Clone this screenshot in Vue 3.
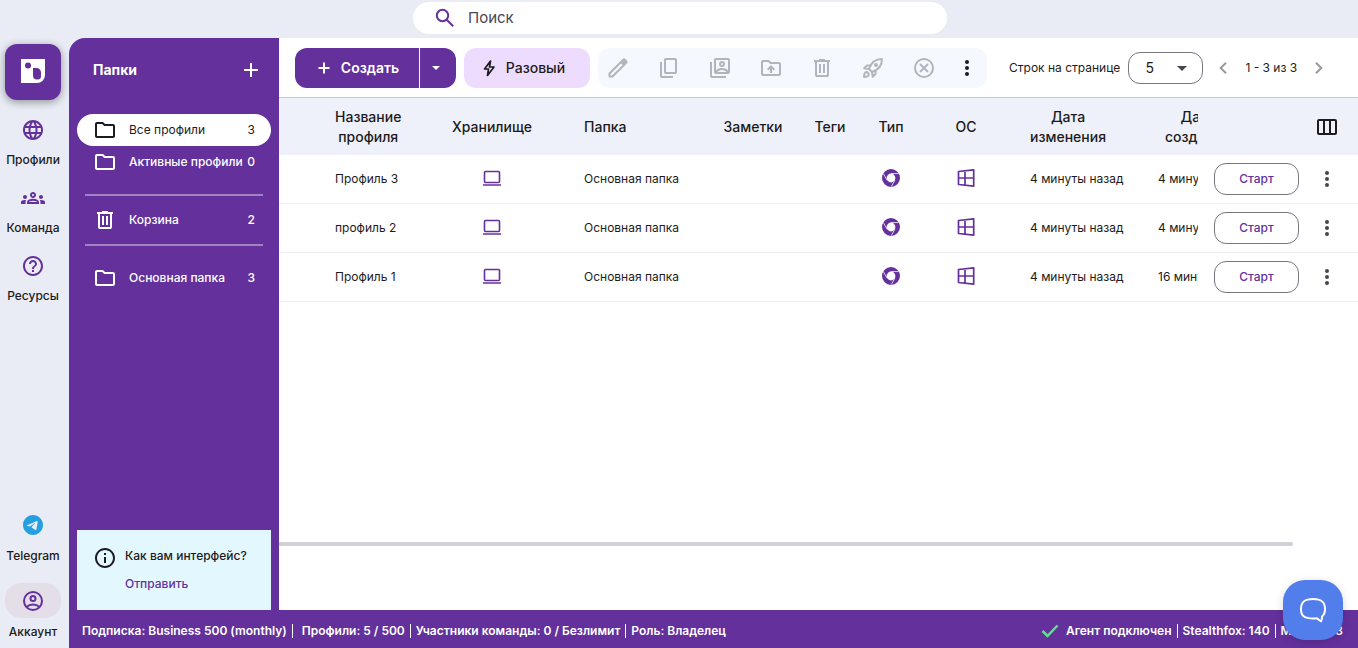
<script setup>
import { ref } from 'vue'

const perPage = ref('5')
const search = ref('')

const icons = {
  add: 'M19 13h-6v6h-2v-6H5v-2h6V5h2v6h6v2z',
  folder: 'M20 6h-8l-2-2H4c-1.1 0-2 .9-2 2v12c0 1.1.9 2 2 2h16c1.1 0 2-.9 2-2V8c0-1.1-.9-2-2-2zm0 12H4V6h5.17l2 2H20v10z',
  globe: 'M11.99 2C6.47 2 2 6.48 2 12s4.47 10 9.99 10C17.52 22 22 17.52 22 12S17.52 2 11.99 2zm6.93 6h-2.95a15.65 15.65 0 0 0-1.38-3.56A8.03 8.03 0 0 1 18.92 8zM12 4.04c.83 1.2 1.48 2.53 1.91 3.96h-3.82c.43-1.43 1.08-2.76 1.91-3.96zM4.26 14C4.1 13.36 4 12.69 4 12s.1-1.36.26-2h3.38c-.08.66-.14 1.32-.14 2s.06 1.34.14 2H4.26zm.82 2h2.95c.32 1.25.78 2.45 1.38 3.56A7.987 7.987 0 0 1 5.08 16zm2.95-8H5.08a7.987 7.987 0 0 1 4.33-3.56A15.65 15.65 0 0 0 8.03 8zM12 19.96c-.83-1.2-1.48-2.53-1.91-3.96h3.82c-.43 1.43-1.08 2.76-1.91 3.96zM14.34 14H9.66c-.09-.66-.16-1.32-.16-2s.07-1.35.16-2h4.68c.09.65.16 1.32.16 2s-.07 1.34-.16 2zm.25 5.56c.6-1.11 1.06-2.31 1.38-3.56h2.95a8.03 8.03 0 0 1-4.33 3.56zM16.36 14c.08-.66.14-1.32.14-2s-.06-1.34-.14-2h3.38c.16.64.26 1.31.26 2s-.1 1.36-.26 2h-3.38z',
  team: 'M4 13c1.1 0 2-.9 2-2s-.9-2-2-2-2 .9-2 2 .9 2 2 2zm1.13 1.1c-.37-.06-.74-.1-1.13-.1-.99 0-1.93.21-2.78.58C.48 14.9 0 15.62 0 16.43V18h4.5v-1.61c0-.83.23-1.61.63-2.29zM20 13c1.1 0 2-.9 2-2s-.9-2-2-2-2 .9-2 2 .9 2 2 2zm4 3.43c0-.81-.48-1.53-1.22-1.85-.85-.37-1.79-.58-2.78-.58-.39 0-.76.04-1.13.1.4.68.63 1.46.63 2.29V18H24v-1.57zm-7.76-2.78c-1.17-.52-2.61-.9-4.24-.9s-3.07.39-4.24.9C6.68 14.13 6 15.21 6 16.39V18h12v-1.61c0-1.18-.68-2.26-1.76-2.74zM8.07 16c.09-.23.13-.39.91-.69.97-.38 1.99-.56 3.02-.56s2.05.18 3.02.56c.77.3.81.46.91.69H8.07zM12 8c.55 0 1 .45 1 1s-.45 1-1 1-1-.45-1-1 .45-1 1-1m0-2c-1.66 0-3 1.34-3 3s1.34 3 3 3 3-1.34 3-3-1.34-3-3-3z',
  help: 'M11 18h2v-2h-2v2zm1-16C6.48 2 2 6.48 2 12s4.48 10 10 10 10-4.48 10-10S17.52 2 12 2zm0 18c-4.41 0-8-3.59-8-8s3.59-8 8-8 8 3.59 8 8-3.59 8-8 8zm0-14c-2.21 0-4 1.79-4 4h2c0-1.1.9-2 2-2s2 .9 2 2c0 2-3 1.75-3 5h2c0-2.25 3-2.5 3-5 0-2.21-1.79-4-4-4z',
  info: 'M11 7h2v2h-2zm0 4h2v6h-2zm1-9C6.48 2 2 6.48 2 12s4.48 10 10 10 10-4.48 10-10S17.52 2 12 2zm0 18c-4.41 0-8-3.59-8-8s3.59-8 8-8 8 3.59 8 8-3.59 8-8 8z',
  telegram: 'M12 2C6.48 2 2 6.48 2 12s4.48 10 10 10 10-4.48 10-10S17.52 2 12 2zm4.64 6.8c-.15 1.58-.8 5.42-1.13 7.19-.14.75-.42 1-.68 1.03-.58.05-1.02-.38-1.58-.75-.88-.58-1.38-.94-2.23-1.5-.99-.65-.35-1.01.22-1.59.15-.15 2.71-2.48 2.76-2.69.01-.03.01-.12-.05-.18s-.14-.04-.21-.02c-.09.02-1.49.95-4.22 2.79-.4.27-.76.41-1.08.4-.36-.01-1.04-.2-1.55-.37-.63-.2-1.12-.31-1.08-.66.02-.18.27-.36.74-.55 2.92-1.27 4.86-2.11 5.83-2.51 2.78-1.16 3.35-1.36 3.73-1.36.08 0 .27.02.39.12.1.08.13.19.14.27-.01.06.01.24 0 .38z',
  trash: 'M7 21q-.825 0-1.413-.587Q5 19.825 5 19V6H4V4h5V3h6v1h5v2h-1v13q0 .825-.587 1.413Q17.825 21 17 21ZM17 6H7v13h10ZM9 17h2V8H9Zm4 0h2V8h-2Z',
  copy: 'M9 18q-.825 0-1.412-.587Q7 16.825 7 16V4q0-.825.588-1.413Q8.175 2 9 2h9q.825 0 1.413.587Q20 3.175 20 4v12q0 .825-.587 1.413Q18.825 18 18 18Zm0-2h9V4H9v12Zm-4 6q-.825 0-1.413-.587Q3 20.825 3 20V6h2v14h11v2Z',
}

const navItems = [
  { icon: 'globe', label: 'Профили' },
  { icon: 'team', label: 'Команда' },
  { icon: 'help', label: 'Ресурсы' },
]

const folders = [
  { icon: 'folder', label: 'Все профили', count: 3, active: true },
  { icon: 'folder', label: 'Активные профили', count: 0, dividerAfter: true },
  { icon: 'trash', label: 'Корзина', count: 2, dividerAfter: true },
  { icon: 'folder', label: 'Основная папка', count: 3 },
]

const rows = [
  { name: 'Профиль 3', folder: 'Основная папка', changed: '4 минуты назад', created: '4 минуты назад' },
  { name: 'профиль 2', folder: 'Основная папка', changed: '4 минуты назад', created: '4 минуты назад' },
  { name: 'Профиль 1', folder: 'Основная папка', changed: '4 минуты назад', created: '16 минут назад' },
]
</script>

<template>
  <div class="app">
    <header class="topbar">
      <label class="search">
        <svg class="icon" viewBox="0 0 24 24" fill="none" stroke="currentColor" stroke-width="2" aria-hidden="true">
          <circle cx="9.500" cy="9.500" r="5.700" /><path d="M13.700 13.700l6.500 6.500" />
        </svg>
        <input v-model="search" type="search" placeholder="Поиск" aria-label="Поиск" />
      </label>
    </header>

    <div class="shell">
      <nav class="rail">
        <a class="logo" href="#" aria-label="Главная">
          <svg width="24" height="24" viewBox="0 0 24 24" aria-hidden="true">
            <path fill="#fff" d="M0 0h24v16a8 8 0 0 1-8 8H0z" />
            <circle cx="7" cy="6.500" r="3" fill="#63309c" />
            <path fill="#63309c" d="M12 9h3.500a4.500 4.500 0 0 1 4.500 4.500v3.500a3.500 3.500 0 0 1-3.500 3.500h-.5a4 4 0 0 1-4-4z" />
          </svg>
        </a>
        <a v-for="item in navItems" :key="item.label" class="nav" href="#">
          <span class="pill"><svg class="icon" viewBox="0 0 24 24" fill="currentColor" aria-hidden="true"><path :d="icons[item.icon]" /></svg></span>
          <span>{{ item.label }}</span>
        </a>
        <span class="grow"></span>
        <a class="nav telegram" href="#">
          <span class="pill"><svg class="icon" viewBox="0 0 24 24" fill="currentColor" aria-hidden="true"><path :d="icons.telegram" /></svg></span>
          <span>Telegram</span>
        </a>
        <a class="nav account" href="#">
          <span class="pill">
            <svg class="icon" viewBox="0 0 24 24" fill="none" stroke="currentColor" stroke-width="2" aria-hidden="true">
              <circle cx="12" cy="12" r="9" /><circle cx="12" cy="9.500" r="2.500" /><path d="M5.500 18c3.500-3.300 9.500-3.300 13 0" />
            </svg>
          </span>
          <span>Аккаунт</span>
        </a>
      </nav>

      <div class="workspace">
        <div class="columns">
          <aside class="sidebar">
            <div class="side-head">
              <h2>Папки</h2>
              <button type="button" aria-label="Добавить папку">
                <svg class="icon" viewBox="0 0 24 24" fill="currentColor" aria-hidden="true"><path :d="icons.add" /></svg>
              </button>
            </div>
            <ul class="folders">
              <li v-for="f in folders" :key="f.label" :class="{ divided: f.dividerAfter }">
                <a href="#" :class="{ active: f.active }">
                  <svg class="icon" viewBox="0 0 24 24" fill="currentColor" aria-hidden="true"><path :d="icons[f.icon]" /></svg>
                  <span class="name">{{ f.label }}</span>
                  <span class="count">{{ f.count }}</span>
                </a>
              </li>
            </ul>
            <span class="grow"></span>
            <section class="feedback">
              <svg class="icon" viewBox="0 0 24 24" fill="currentColor" aria-hidden="true"><path :d="icons.info" /></svg>
              <div>
                <p>Как вам интерфейс?</p>
                <a href="#">Отправить</a>
              </div>
            </section>
          </aside>

          <main class="main">
            <div class="toolbar">
              <div class="split">
                <button type="button" class="create">
                  <svg width="18" height="18" viewBox="0 0 18 18" fill="none" stroke="currentColor" stroke-width="2" aria-hidden="true"><path d="M9 3.500v11M3.500 9h11" /></svg>
                  Создать
                </button>
                <button type="button" class="caret" aria-label="Ещё варианты">
                  <svg width="24" height="24" viewBox="0 0 24 24" fill="currentColor" aria-hidden="true"><path d="M8 10h8l-4 4z" /></svg>
                </button>
              </div>
              <button type="button" class="quick">
                <svg width="20" height="20" viewBox="0 0 20 20" fill="none" stroke="currentColor" stroke-width="1.700" stroke-linejoin="round" aria-hidden="true"><path d="M11.500 3L5.500 11h4l-1 6.500L15 9h-4.500z" /></svg>
                Разовый
              </button>
              <div class="actions">
                <button type="button" disabled aria-label="Редактировать">
                  <svg class="icon" viewBox="0 0 24 24" fill="none" stroke="currentColor" stroke-width="2" stroke-linejoin="round" aria-hidden="true">
                    <path d="M3.500 20.500v-3L15 6l3 3L6.500 20.500z" /><path fill="currentColor" d="M15.500 5.500l1.800-1.800q.7-.7 1.500 0l1.500 1.500q.7.8 0 1.500l-1.800 1.800z" />
                  </svg>
                </button>
                <button type="button" disabled aria-label="Копировать">
                  <svg class="icon" viewBox="0 0 24 24" fill="currentColor" aria-hidden="true"><path :d="icons.copy" /></svg>
                </button>
                <button type="button" disabled aria-label="Передать">
                  <svg class="icon" viewBox="0 0 24 24" fill="none" stroke="currentColor" stroke-width="2" aria-hidden="true">
                    <rect x="7" y="3" width="14" height="14" rx="1" /><circle cx="14" cy="8" r="2" /><path d="M8 16c2.500-4 9.500-4 12 0M3 6v14q0 1 1 1h14" />
                  </svg>
                </button>
                <button type="button" disabled aria-label="Переместить в папку">
                  <svg class="icon" viewBox="0 0 24 24" fill="currentColor" aria-hidden="true"><path :d="icons.folder" /><path d="M11 17h2v-4.200l1.600 1.600L16 13l-4-4-4 4 1.400 1.400 1.600-1.600z" /></svg>
                </button>
                <button type="button" disabled aria-label="Удалить">
                  <svg class="icon" viewBox="0 0 24 24" fill="currentColor" aria-hidden="true"><path :d="icons.trash" /></svg>
                </button>
                <button type="button" disabled aria-label="Запустить">
                  <svg class="icon" viewBox="0 0 24 24" fill="none" stroke="currentColor" stroke-width="2" stroke-linejoin="round" aria-hidden="true">
                    <path d="M8 13c2-6 6-10 13-10 0 7-4 11-10 13z" /><path d="M9.500 9.500H6L3.200 12.300 8 13M14.500 14.500V18l-2.800 2.800L11 16" /><path d="M3 21c0-2.500.3-3.500 1.200-4.400a2.300 2.300 0 0 1 3.200 3.200C6.500 20.700 5.500 21 3 21z" /><circle cx="15" cy="9" r="1" fill="currentColor" />
                  </svg>
                </button>
                <button type="button" disabled aria-label="Остановить">
                  <svg class="icon" viewBox="0 0 24 24" fill="none" stroke="currentColor" stroke-width="2" aria-hidden="true"><circle cx="12" cy="12" r="9" /><path d="M8 8l8 8M16 8l-8 8" /></svg>
                </button>
                <button type="button" class="more" aria-label="Ещё">
                  <svg class="icon" viewBox="0 0 24 24" fill="currentColor" aria-hidden="true"><circle cx="12" cy="6" r="2" /><circle cx="12" cy="12" r="2" /><circle cx="12" cy="18" r="2" /></svg>
                </button>
              </div>
              <div class="pager">
                <label for="per-page">Строк на странице</label>
                <span class="select">
                  <select id="per-page" v-model="perPage"><option>5</option><option>10</option><option>25</option></select>
                  <svg width="24" height="24" viewBox="0 0 24 24" fill="currentColor" aria-hidden="true"><path d="M7 10h10l-5 5z" /></svg>
                </span>
                <button type="button" aria-label="Назад" disabled>
                  <svg width="24" height="24" viewBox="0 0 24 24" fill="none" stroke="currentColor" stroke-width="2" aria-hidden="true"><path d="M15 6.700L9.700 12l5.300 5.300" /></svg>
                </button>
                <span class="range">1 - 3 из 3</span>
                <button type="button" aria-label="Вперёд" disabled>
                  <svg width="24" height="24" viewBox="0 0 24 24" fill="none" stroke="currentColor" stroke-width="2" aria-hidden="true"><path d="M9 6.700l5.300 5.300L9 17.300" /></svg>
                </button>
              </div>
            </div>

            <div class="table-area">
              <table>
                <colgroup>
                  <col class="c-check" /><col class="c-name" /><col class="c-store" /><col class="c-folder" /><col class="c-notes" /><col class="c-tags" /><col class="c-type" /><col class="c-os" /><col class="c-changed" /><col /><col class="c-act" />
                </colgroup>
                <thead>
                  <tr>
                    <th></th>
                    <th><span>Название<br />профиля</span></th>
                    <th class="mid">Хранилище</th>
                    <th class="folder">Папка</th>
                    <th class="mid">Заметки</th>
                    <th class="mid">Теги</th>
                    <th class="mid">Тип</th>
                    <th class="mid">ОС</th>
                    <th class="changed"><span>Дата<br />изменения</span></th>
                    <th class="created"><span>Дата<br />создания</span></th>
                    <th class="sticky">
                      <button type="button" class="cols" aria-label="Колонки">
                        <svg class="icon" viewBox="0 0 24 24" fill="none" stroke="currentColor" stroke-width="2" aria-hidden="true"><rect x="3" y="5" width="18" height="14" rx="1" /><path d="M9 5v14M15 5v14" /></svg>
                      </button>
                    </th>
                  </tr>
                </thead>
                <tbody>
                  <tr v-for="row in rows" :key="row.name">
                    <td></td>
                    <td>{{ row.name }}</td>
                    <td class="mid">
                      <svg class="glyph" width="18" height="18" viewBox="0 0 18 18" fill="none" stroke="currentColor" aria-label="Локально"><rect x="1.500" y="2.500" width="15" height="11" rx="1" stroke-width="1.600" /><path d="M0 16h18" stroke-width="1.500" /></svg>
                    </td>
                    <td class="folder">{{ row.folder }}</td>
                    <td></td>
                    <td></td>
                    <td class="mid">
                      <svg class="glyph" width="18" height="18" viewBox="0 0 18 18" fill="none" aria-label="Chromium"><circle cx="9" cy="9" r="6.700" stroke="currentColor" stroke-width="4.600" /><path d="M9 4.600h7.500M12.900 11.200L9.200 17.700M5.100 11.200L1.400 4.700" stroke="#fff" stroke-width=".8" /></svg>
                    </td>
                    <td class="mid">
                      <svg class="glyph" width="18" height="18" viewBox="0 0 18 18" fill="none" stroke="currentColor" stroke-width="1.700" stroke-linejoin="round" aria-label="Windows"><path d="M1.500 2.500L16.700.9v16.200L1.500 15.500zM8 2v14M1.500 9h15" /></svg>
                    </td>
                    <td class="changed">{{ row.changed }}</td>
                    <td class="clip">{{ row.created }}</td>
                    <td class="sticky">
                      <div class="row-actions">
                        <button type="button" class="start">Старт</button>
                        <button type="button" class="kebab" aria-label="Меню профиля">
                          <svg class="icon" viewBox="0 0 24 24" fill="currentColor" aria-hidden="true"><circle cx="12" cy="6" r="2" /><circle cx="12" cy="12" r="2" /><circle cx="12" cy="18" r="2" /></svg>
                        </button>
                      </div>
                    </td>
                  </tr>
                </tbody>
              </table>
            </div>
            <div class="scrollbar"><span></span></div>
          </main>
        </div>

        <footer class="status">
          <span>Подписка: Business 500 (monthly)</span><i></i>
          <span class="wide">Профили: 5 / 500</span><i></i>
          <span>Участники команды: 0 / Безлимит</span><i></i>
          <span>Роль: Владелец</span>
          <div class="agent">
            <svg width="18" height="14" viewBox="0 0 18 14" fill="none" stroke="#5be584" stroke-width="2.500" aria-hidden="true"><path d="M1.500 7l5 5L16.500 1.500" /></svg>
            <span>Агент подключен</span><i></i>
            <span>Stealthfox: 140</span><i></i>
            <span>Mimic: 138</span>
          </div>
        </footer>
      </div>
    </div>

    <button type="button" class="chat" aria-label="Чат поддержки">
      <svg width="30" height="30" viewBox="0 0 30 30" fill="none" stroke="#fff" stroke-width="2" stroke-linejoin="round" aria-hidden="true">
        <path d="M15 4c8 0 12 2.500 12 10 0 3.600-1 6-3 7.500.2 1.700-.2 3.300-1 4.800-1.600-.8-3-1.800-4-3.100-1.300.2-2.600.3-4 .3-8 0-12-2-12-9.500S7 4 15 4z" />
      </svg>
    </button>
  </div>
</template>

<style>
body { margin: 0; }
</style>

<style scoped>
* { box-sizing: border-box; }
.app {
  min-height: 100vh;
  display: flex;
  flex-direction: column;
  background: #e9ecf4;
  color: #1d1b20;
  font: 400 13px/20px Inter, "Noto Sans", sans-serif;
}
a { color: inherit; text-decoration: none; }
button { border: 0; padding: 0; background: none; font: inherit; color: inherit; cursor: pointer; display: flex; align-items: center; justify-content: center; }
.icon { width: 24px; height: 24px; flex: none; display: block; }
.grow { flex: 1; }

.topbar { height: 38px; flex: none; display: flex; justify-content: center; padding: 2px 15px 4px 17px; }
.search { width: 534px; display: flex; align-items: center; gap: 11px; padding: 0 20px; background: #fff; border-radius: 16px; color: #63309c; }
.search input { flex: 1; min-width: 0; border: 0; outline: 0; padding: 0; background: none; font: 400 15px/20px Inter, sans-serif; color: #1d1b20; }
.search input::placeholder { color: #49454f; opacity: 1; }

.shell { flex: 1; display: flex; }
.rail { width: 69px; flex: none; display: flex; flex-direction: column; padding: 6px 8px 6px 5px; align-items: center; }
.logo { width: 56px; height: 56px; margin-bottom: 14px; display: flex; align-items: center; justify-content: center; background: #63309c; border-radius: 12px; box-shadow: 0 2px 8px rgba(0, 0, 0, .4); }
.logo svg { margin-bottom: 2px; }
.nav { height: 68px; display: flex; flex-direction: column; align-items: center; gap: 4px; font-weight: 500; font-size: 12px; }
.pill { width: 56px; height: 32px; display: flex; align-items: center; justify-content: center; border-radius: 16px; color: #63309c; }
.telegram { height: 74px; gap: 5px; }
.telegram .pill { color: #259fde; }
.account { height: 59px; }
.account .pill { height: 35px; background: #e4dee9; }

.workspace { flex: 1; min-width: 0; display: flex; flex-direction: column; }
.columns { flex: 1; display: flex; min-width: 0; }
.sidebar { width: 210px; flex: none; display: flex; flex-direction: column; padding: 0 8px; background: #63309c; color: #fff; border-top-left-radius: 16px; }
.side-head { display: flex; align-items: center; justify-content: space-between; height: 63px; padding: 0 8px 0 16px; }
.side-head h2 { margin: 0; font-size: 14px; line-height: 20px; font-weight: 700; }
.folders { list-style: none; margin: 13px 0 0; padding: 0; font-weight: 500; font-size: 12px; }
.folders a { height: 32px; display: flex; align-items: center; padding: 0 16px; border-radius: 16px; }
.folders .icon { margin-right: 12px; }
.folders .name { flex: 1; white-space: nowrap; }
.folders .active { background: #fff; color: #1d1b20; font-weight: 400; }
.divided::after { content: ""; display: block; height: 2px; margin: 8px; background: rgba(255, 255, 255, .4); }
.divided:nth-child(2)::after { margin-top: 16px; }
.folders li:last-child { margin-top: 16px; }
.feedback { display: flex; gap: 8px; height: 80px; padding: 16px; background: #e3f7ff; color: #1d1b20; font-size: 12px; font-weight: 500; }
.feedback p { margin: 0 0 8px; white-space: nowrap; }
.feedback a { color: #63309c; }

.main { flex: 1; min-width: 0; display: flex; flex-direction: column; background: #fff; padding-bottom: 64px; }
.toolbar { display: flex; align-items: center; height: 60px; padding: 0 16px; gap: 8px; border-bottom: 1px solid #cac8cc; font-size: 14px; font-weight: 500; white-space: nowrap; }
.split { display: flex; height: 40px; border-radius: 12px; background: #63309c; color: #fff; overflow: hidden; font-weight: 600; }
.create { width: 125px; gap: 8px; border-right: 1px solid #fff; }
.caret { width: 36px; padding-right: 4px; }
.quick { width: 126px; height: 40px; gap: 7px; padding-right: 10px; border-radius: 12px; background: #eedcff; }
.actions { display: flex; align-items: center; height: 40px; border-radius: 12px; background: #f5f8ff; }
.actions button { width: 40px; height: 40px; margin-right: 11px; color: #b4b5bb; }
.actions .more { margin-right: 0; color: #1d1b20; margin-left: -8px; }
.pager { display: flex; align-items: center; margin-left: 14px; font-size: 12px; font-weight: 400; }
.pager button { width: 24px; height: 24px; color: #9a999d; }
.select { position: relative; margin: 0 8px; color: #49454f; }
.select select { appearance: none; display: block; width: 75px; height: 32px; padding: 0 16px; border: 1px solid #79747e; border-radius: 12px; background: #fff; color: #1d1b20; font: 400 14px/20px Inter, sans-serif; }
.select svg { position: absolute; right: 9px; top: 4px; pointer-events: none; }
.range { margin: 0 10px; }

.table-area { flex: 1; overflow-x: auto; scrollbar-width: none; }
table { width: 100%; min-width: 1079px; table-layout: fixed; border-collapse: separate; border-spacing: 0; }
.c-check { width: 48px; } .c-name { width: 108px; } .c-store { width: 114px; } .c-folder { width: 158px; } .c-notes { width: 92px; }
.c-tags { width: 62px; } .c-type { width: 60px; } .c-os { width: 90px; } .c-changed { width: 139px; } .c-act { width: 160px; }
th, td { padding: 0 8px; text-align: left; white-space: nowrap; }
th { height: 57px; background: #eef1fa; font-size: 14px; font-weight: 500; }
th span { display: inline-block; text-align: center; }
td { height: 49px; font-size: 12px; border-bottom: 1px solid #eeeef8; background: #fff; }
.mid { text-align: center; padding: 0; }
.folder { padding-left: 35px; }
.changed { padding-left: 19px; }
.clip { padding-right: 0; overflow: hidden; }
th.created { padding: 0 0 0 15px; overflow: hidden; }
.glyph { display: block; margin: 0 auto 3px; color: #63309c; }
.sticky { position: sticky; right: 0; padding: 0 16px; }
.cols { margin: 0 3px 0 auto; }
.row-actions { display: flex; align-items: center; gap: 16px; }
.start { width: 85px; height: 32px; border: 1px solid #79747e; border-radius: 12px; color: #63309c; font-weight: 500; }
.kebab { color: #49454f; }
.scrollbar { height: 4px; }
.scrollbar span { display: block; width: 94%; height: 4px; background: #d0d0d7; border-radius: 0 2px 2px 0; }

.status { display: flex; align-items: center; height: 38px; padding: 4px 15px 0 13px; background: #63309c; color: #fff; font-size: 12px; font-weight: 600; white-space: nowrap; }
.status i { width: 1px; height: 14px; margin: 0 5px; background: #fff; }
.status .wide { margin-left: 4px; }
.agent { margin-left: auto; display: flex; align-items: center; }
.agent svg { margin-right: 7px; }

.chat { position: fixed; right: 15px; bottom: 8px; width: 60px; height: 60px; border-radius: 22px; background: #527eec; box-shadow: 0 2px 8px rgba(0, 0, 0, .15); }
</style>
